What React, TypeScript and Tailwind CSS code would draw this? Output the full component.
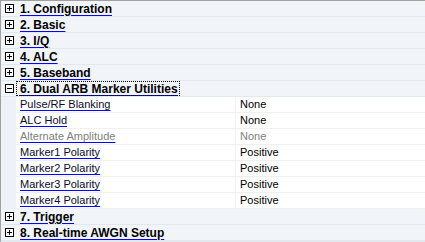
import { Fragment } from "react";

type Prop = { name: string; value: string; disabled?: boolean };
type Category = { title: string; open?: boolean; selected?: boolean; props?: Prop[] };

const categories: Category[] = [
  { title: "1. Configuration" },
  { title: "2. Basic" },
  { title: "3. I/Q" },
  { title: "4. ALC" },
  { title: "5. Baseband" },
  {
    title: "6. Dual ARB Marker Utilities",
    open: true,
    selected: true,
    props: [
      { name: "Pulse/RF Blanking", value: "None" },
      { name: "ALC Hold", value: "None" },
      { name: "Alternate Amplitude", value: "None", disabled: true },
      { name: "Marker1 Polarity", value: "Positive" },
      { name: "Marker2 Polarity", value: "Positive" },
      { name: "Marker3 Polarity", value: "Positive" },
      { name: "Marker4 Polarity", value: "Positive" },
    ],
  },
  { title: "7. Trigger" },
  { title: "8. Real-time AWGN Setup" },
];

const ExpandBox = ({ open }: { open?: boolean }) => (
  <svg width="9" height="9" viewBox="0 0 9 9" className="shrink-0">
    <rect x="0.5" y="0.5" width="8" height="8" fill="#fff" stroke="#000" />
    <line x1="2" y1="4.5" x2="7" y2="4.5" stroke="#000" />
    {!open && <line x1="4.5" y1="2" x2="4.5" y2="7" stroke="#000" />}
  </svg>
);

export default function App() {
  return (
    <div
      className="w-[425px] h-[242px] bg-white border-t border-l border-[#a0a0a0] border-b border-b-[#e3e7ee] overflow-hidden text-[11px] leading-none"
      style={{ fontFamily: '"Liberation Sans", Arial, sans-serif' }}
    >
      {categories.map((c) => (
        <Fragment key={c.title}>
          {/* Category row */}
          <div className="flex items-center h-4 bg-[#f1f4f9] border-b border-[#e3e7ee] box-border">
            <div className="w-[15px] flex justify-center pl-[1px]">
              <ExpandBox open={c.open} />
            </div>
            <div
              className={`flex items-center h-[15px] pl-[4px] pr-[2px] ${
                c.selected ? "outline outline-1 outline-dotted outline-black -outline-offset-1" : ""
              }`}
            >
              <span className="font-bold text-[12px] text-black underline decoration-[#0000ff] underline-offset-[2px]">
                {c.title}
              </span>
            </div>
          </div>

          {/* Property rows */}
          {c.props?.map((p) => (
            <div key={p.name} className="flex h-4">
              <div className="w-[15px] bg-[#eef1f6] shrink-0" />
              <div className="flex flex-1 border-b border-[#f0f0f0]">
                <div className="w-[220px] flex items-center pl-[4px] border-r border-[#f0f0f0]">
                  <span
                    className={`underline decoration-[#0000ff] underline-offset-[2px] ${
                      p.disabled ? "text-[#808080]" : "text-[#0a0a28]"
                    }`}
                  >
                    {p.name}
                  </span>
                </div>
                <div
                  className={`flex items-center pl-[4px] ${
                    p.disabled ? "text-[#808080]" : "text-black"
                  }`}
                >
                  {p.value}
                </div>
              </div>
            </div>
          ))}
        </Fragment>
      ))}
    </div>
  );
}
